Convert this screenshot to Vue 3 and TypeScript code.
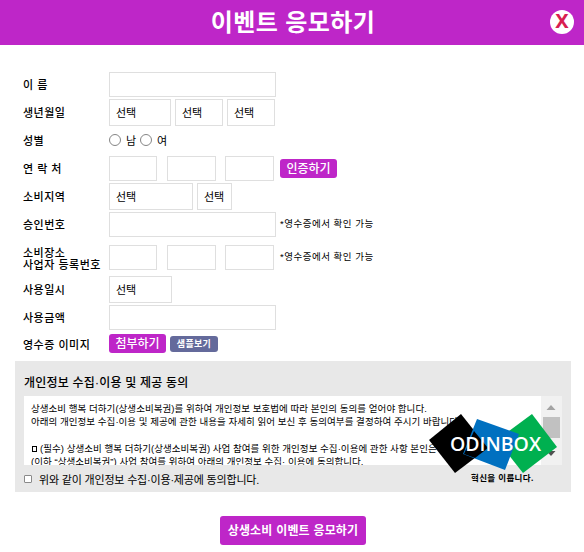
<template>
  <div class="event-form">
    <header class="header">
      <h1>이벤트 응모하기</h1>
      <button class="close" type="button" aria-label="닫기">X</button>
    </header>

    <form class="fields" @submit.prevent>
      <div v-for="row in rows" :key="row.id" class="row" :class="row.id">
        <label class="label">
          <span v-for="line in row.label" :key="line">{{ line }}</span>
        </label>
        <template v-if="row.id === 'gender'">
          <label v-for="g in genders" :key="g" class="radio">
            <input v-model="gender" type="radio" name="gender" :value="g" />
            <span>{{ g }}</span>
          </label>
        </template>
        <div
          v-for="(box, i) in row.boxes"
          :key="i"
          class="box"
          :class="{ select: row.select }"
          :style="{ width: box + 'px' }"
        >
          <span v-if="row.select">선택</span>
        </div>
        <button v-if="row.button" class="action" type="button">{{ row.button }}</button>
        <button v-if="row.id === 'receipt'" class="sample" type="button">샘플보기</button>
        <span v-if="row.note" class="note">{{ row.note }}</span>
      </div>
    </form>

    <section class="agreement">
      <h2>개인정보 수집·이용 및 제공 동의</h2>
      <div class="terms">
        <div class="terms-text">
          <p>상생소비 행복 더하기(상생소비복권)를 위하여 개인정보 보호법에 따라 본인의 동의를 얻어야 합니다.</p>
          <p>아래의 개인정보 수집·이용 및 제공에 관한 내용을 자세히 읽어 보신 후 동의여부를 결정하여 주시기 바랍니다.</p>
          <p>&nbsp;</p>
          <p><i class="square"></i>(필수) 상생소비 행복 더하기(상생소비복권) 사업 참여를 위한 개인정보 수집·이용에 관한 사항 본인은</p>
          <p>(이하 “상생소비복권”) 사업 참여를 위하여 아래의 개인정보 수집· 이용에 동의합니다.</p>
        </div>
        <div class="scrollbar">
          <svg width="21" height="69" viewBox="0 0 21 69">
            <path d="M5.5 14 L10 9 L14.5 14Z" fill="#a3a3a3" />
            <rect x="2" y="21" width="17" height="21" fill="#c1c1c1" />
            <path d="M5.5 55 L14.5 55 L10 60Z" fill="#505050" />
          </svg>
        </div>
      </div>
      <label class="agree">
        <input v-model="agreed" type="checkbox" />
        <span>위와 같이 개인정보 수집·이용·제공에 동의합니다.</span>
      </label>
      <div class="logo">
        <svg width="130" height="60" viewBox="0 0 130 60">
          <path d="M32 0 L59 34 L26 59 L0 26Z" fill="#000" />
          <path d="M103 0 L128 33 L94 59 L68 26Z" fill="#00b050" />
          <path d="M48 5 L90 20 L76 56 L34 40Z" fill="#0070c0" />
          <path d="M45 17 L59 34 L46 44 L35 40Z" fill="#000" />
          <text x="21" y="37" textLength="91" lengthAdjust="spacingAndGlyphs">ODINBOX</text>
        </svg>
        <span>혁신을 이룹니다.</span>
      </div>
    </section>

    <button class="submit" type="button">상생소비 이벤트 응모하기</button>
  </div>
</template>

<script setup lang="ts">
import { ref } from 'vue'

interface Row {
  id: string
  label: string[]
  boxes?: number[]
  select?: boolean
  button?: string
  note?: string
}

const gender = ref<string>('')
const agreed = ref<boolean>(false)
const genders: string[] = ['남', '여']

const rows: Row[] = [
  { id: 'name', label: ['이 름'], boxes: [167] },
  { id: 'birth', label: ['생년월일'], boxes: [62, 48, 48], select: true },
  { id: 'gender', label: ['성별'] },
  { id: 'phone', label: ['연 락 처'], boxes: [48, 49, 49], button: '인증하기' },
  { id: 'region', label: ['소비지역'], boxes: [84, 35], select: true },
  { id: 'approval', label: ['승인번호'], boxes: [167], note: '*영수증에서 확인 가능' },
  {
    id: 'business',
    label: ['소비장소', '사업자 등록번호'],
    boxes: [48, 49, 49],
    note: '*영수증에서 확인 가능'
  },
  { id: 'date', label: ['사용일시'], boxes: [63], select: true },
  { id: 'amount', label: ['사용금액'], boxes: [167] },
  { id: 'receipt', label: ['영수증 이미지'], button: '첨부하기' }
]
</script>

<style>
body {
  margin: 0;
  background: #fff;
}
</style>

<style scoped>
.event-form {
  width: 584px;
  height: 552px;
  overflow: hidden;
  display: flex;
  flex-direction: column;
  font-family: 'Liberation Sans', 'Noto Sans CJK KR', sans-serif;
  font-size: 11px;
  color: #000;
}

.event-form * {
  box-sizing: border-box;
  white-space: nowrap;
}

button {
  border: none;
  padding: 0;
  font-family: inherit;
  color: #fff;
}

.header {
  position: relative;
  flex: none;
  height: 45px;
  display: flex;
  align-items: center;
  justify-content: center;
  background: #be26c8;
}

h1 {
  margin: 0 0 0 2px;
  font-size: 24px;
  line-height: 44px;
  font-weight: 700;
  letter-spacing: 0.4px;
  color: #fff;
}

.close {
  position: absolute;
  top: 10px;
  right: 10px;
  width: 24px;
  height: 24px;
  padding-bottom: 2px;
  border-radius: 50%;
  background: #fff;
  color: #d81e50;
  font: 700 20px/22px 'Noto Sans', sans-serif;
}

.fields {
  flex: none;
  height: 316px;
  padding: 27px 0 0 23px;
}

.row {
  display: flex;
  align-items: center;
  height: 25px;
}

.label {
  width: 86px;
  display: flex;
  flex-direction: column;
  font-weight: 500;
  line-height: 12px;
  letter-spacing: 0.5px;
}

.box {
  height: 25px;
  border: 1px solid #dfdfdf;
  margin-right: 4px;
}

.select {
  height: 27px;
  padding-left: 6px;
  line-height: 26px;
}

.birth,
.region,
.date {
  height: 27px;
  margin-top: 2px;
}

.gender {
  height: 30px;
}

.approval,
.amount {
  margin-top: 2px;
}

.business {
  margin-top: 8px;
}

.business .label {
  padding-top: 3px;
  line-height: 12.5px;
}

.date {
  margin-top: 6px;
}

.receipt {
  height: 19px;
  margin-top: 4px;
}

.receipt .label {
  padding-top: 2px;
}

.phone .box,
.business .box {
  margin-right: 10px;
}

.phone .box + .box,
.business .box + .box {
  margin-right: 9px;
}

.phone .box:nth-of-type(3),
.business .box:nth-of-type(3) {
  margin-right: 6px;
}

.radio {
  display: flex;
  align-items: center;
  width: 31px;
  height: 28px;
  margin-top: -2px;
}

.radio input {
  appearance: none;
  width: 12px;
  height: 12px;
  margin: 0 5px 0 0;
  border: 1px solid #858585;
  border-radius: 50%;
}

.action {
  width: 57px;
  height: 19px;
  padding-top: 2px;
  border-radius: 3px;
  background: #be26c8;
  font-size: 12px;
  line-height: 17px;
  font-weight: 500;
}

.sample {
  width: 48px;
  height: 16px;
  padding-top: 1px;
  margin: 1px 0 0 4px;
  border-radius: 3px;
  background: #646a9b;
  font-size: 9px;
  line-height: 15px;
  font-weight: 700;
  letter-spacing: 0.3px;
}

.note {
  font-size: 9.5px;
  line-height: 12px;
  padding-bottom: 1px;
  letter-spacing: 0.5px;
}

.agreement {
  position: relative;
  flex: none;
  width: 556px;
  height: 131px;
  margin-left: 15px;
  padding: 14px 9px 0;
  background: #e8e8e8;
}

h2 {
  margin: 0;
  height: 21px;
  font-size: 12px;
  line-height: 16px;
  font-weight: 500;
  letter-spacing: 0.2px;
}

.terms {
  display: flex;
  height: 69px;
  background: #fff;
}

.terms-text {
  flex: 1;
  overflow: hidden;
  padding: 5px 0 0 7px;
}

.terms p {
  margin: 0;
  height: 13.25px;
  font-size: 9.5px;
  line-height: 15px;
  letter-spacing: 0.04px;
}

.square {
  display: inline-block;
  width: 5px;
  height: 6px;
  margin: 0 3px 0 1px;
  border: 1px solid #000;
}

.scrollbar {
  width: 21px;
  background: #f1f1f1;
}

.scrollbar svg,
.logo svg {
  display: block;
}

.agree {
  display: flex;
  align-items: center;
  height: 27px;
  letter-spacing: -0.18px;
}

.agree input {
  appearance: none;
  width: 8px;
  height: 8px;
  margin: 0 7px 0 0;
  border: 1px solid #8a8a8a;
  border-radius: 1px;
  background: #fff;
}

/* Logo lies over the terms box */
.logo {
  position: absolute;
  left: 414px;
  top: 53px;
  width: 130px;
}

.logo text {
  font: 600 20px 'Open Sans', sans-serif;
  fill: #fff;
}

.logo span {
  display: block;
  padding-left: 42px;
  font-size: 8.5px;
  line-height: 8px;
  font-weight: 700;
  letter-spacing: 0.35px;
}

.submit {
  flex: none;
  width: 146px;
  height: 29px;
  padding-top: 2px;
  margin: 24px 0 0 220px;
  border-radius: 3px;
  background: #be26c8;
  font-size: 12px;
  line-height: 27px;
  font-weight: 700;
  letter-spacing: 0.2px;
}
</style>
